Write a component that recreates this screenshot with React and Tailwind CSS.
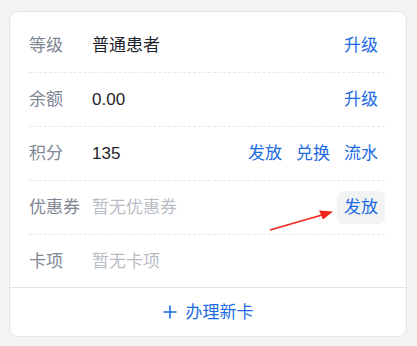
import React from 'react'

const rows = [
  { label: '等级', value: '普通患者', actions: ['升级'] },
  { label: '余额', value: '0.00', actions: ['升级'] },
  { label: '积分', value: '135', actions: ['发放', '兑换', '流水'] },
  { label: '优惠券', value: '暂无优惠券', empty: true, actions: ['发放'], active: true },
  { label: '卡项', value: '暂无卡项', empty: true, actions: [] },
]

function Row({ row, last }) {
  return (
    <div
      className={
        'flex items-center ' +
        (last ? 'h-[52px]' : 'h-[54px] border-b border-dashed border-[#e4e6eb]')
      }
    >
      <div className="w-[63px] shrink-0 text-[#7f8793]">{row.label}</div>
      <div className={'flex-1 ' + (row.empty ? 'text-[#b9bdc5]' : 'text-[#1f2329]')}>{row.value}</div>
      <div className="flex items-center">
        {row.actions.map((a) => (
          <button
            key={a}
            className={
              'h-[33px] px-[7px] rounded-[7px] text-[#1d6be0] ' +
              (row.active ? 'bg-[#f2f3f5]' : '')
            }
          >
            {a}
          </button>
        ))}
      </div>
    </div>
  )
}

export default function App() {
  return (
    <div
      className="w-[417px] h-[346px] bg-[#f4f4f5] pt-[11px] pl-[9px] pr-[10px] text-[17px] leading-none relative"
      style={{ fontFamily: '"Liberation Sans", "Noto Sans CJK SC", sans-serif' }}
    >
      <div className="bg-white border border-[#e2e5ea] rounded-[9px] h-[326px] flex flex-col">
        <div className="pt-[7px] pl-[19px] pr-[21px]">
          {rows.map((r, i) => (
            <Row key={r.label} row={r} last={i === rows.length - 1} />
          ))}
        </div>
        <div className="border-t border-[#e2e5ea] flex-1 flex items-center justify-center gap-[9px] text-[#1d6be0]">
          <svg width="14" height="14" viewBox="0 0 14 14">
            <path d="M7 0.5V13.5M0.5 7H13.5" stroke="#1d6be0" strokeWidth="1.6" />
          </svg>
          <span>办理新卡</span>
        </div>
      </div>
      {/* red pointer arrow */}
      <svg className="absolute left-0 top-0 pointer-events-none" width="417" height="346">
        <line x1="270" y1="230" x2="322" y2="215" stroke="#f0261b" strokeWidth="1.8" />
        <polygon points="333,211.5 319,210.5 323,219.5" fill="#f0261b" />
      </svg>
    </div>
  )
}
